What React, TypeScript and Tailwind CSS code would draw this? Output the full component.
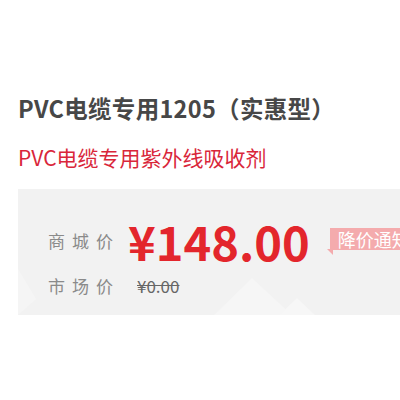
import React from "react";

export default function App() {
  const font = { fontFamily: '"Noto Sans CJK SC", "Noto Sans", sans-serif' };
  return (
    <div className="w-[400px] h-[400px] bg-white overflow-hidden" style={font}>
      <div className="pt-[92px] pl-[18px]">
        <h1 className="text-[23.5px] leading-[32px] font-bold text-[#474747] whitespace-nowrap tracking-[0.3px]">
          PVC电缆专用1205（实惠型）
        </h1>
        <p className="mt-[19px] text-[21px] leading-[28px] text-[#d9263a] whitespace-nowrap">
          PVC电缆专用紫外线吸收剂
        </p>
      </div>
      <div className="relative mt-[18px] ml-[18px] h-[126px] bg-[#f2f2f2] pt-[24px] pl-[30px] overflow-hidden">
        <svg className="absolute left-0 top-0" width="382" height="126" viewBox="0 0 382 126">
          <polygon points="234,89 196,126 274,126" fill="#f6f6f6" />
          <polygon points="279,109 261,126 297,126" fill="#f7f7f7" />
          <polygon points="0,80 18,110 0,126" fill="#f5f5f5" />
        </svg>
        <div className="relative flex items-center h-[56px] whitespace-nowrap">
          <span className="shrink-0 w-[80px] text-[17px] tracking-[7px] text-[#8a8a8a]">商城价</span>
          <span className="shrink-0 text-[47px] leading-[56px] font-bold text-[#e3262c]">¥148.00</span>
          <span className="relative shrink-0 ml-[20px] h-[22px] flex items-center pl-[8px] pr-[10px] bg-[#f4abad] text-white text-[18px] leading-[22px] -mt-[4px]">
            <span className="absolute left-[-3px] bottom-[-5px] w-0 h-0 border-t-[6px] border-t-[#f4abad] border-l-[6px] border-l-transparent"></span>
            降价通知
          </span>
        </div>
        <div className="relative flex items-center h-[34px] whitespace-nowrap">
          <span className="shrink-0 w-[89px] text-[17px] tracking-[7px] text-[#8a8a8a]">市场价</span>
          <span className="shrink-0 text-[17px] text-[#666] line-through">¥0.00</span>
        </div>
      </div>
    </div>
  );
}
